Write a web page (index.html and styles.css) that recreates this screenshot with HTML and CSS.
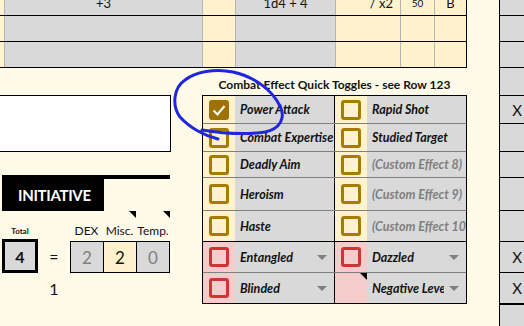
FILE: index.html
```html
<!DOCTYPE html>
<html lang="en">
<head>
    <meta charset="UTF-8">
    <meta name="viewport" content="width=device-width, initial-scale=1.0">
    <title>Character Sheet - Combat</title>
    <link rel="stylesheet" href="styles.css">
</head>
<body>

    <div class="sheet">
        <!-- Main area -->
        <div class="main">
            <!-- Attack rows -->
            <div class="top-row first">
                <div class="cell yellow"></div>
                <div class="cell gray">+3</div>
                <div class="cell yellow"></div>
                <div class="cell gray">1d4 + 4</div>
                <div class="cell yellow right">/ x2</div>
                <div class="cell yellow small">50</div>
                <div class="cell yellow last">B</div>
            </div>
            <div class="top-row">
                <div class="cell yellow"></div>
                <div class="cell gray"></div>
                <div class="cell yellow"></div>
                <div class="cell gray"></div>
                <div class="cell yellow"></div>
                <div class="cell yellow"></div>
                <div class="cell yellow last"></div>
            </div>
            <div class="top-row">
                <div class="cell yellow"></div>
                <div class="cell gray"></div>
                <div class="cell yellow"></div>
                <div class="cell gray"></div>
                <div class="cell yellow"></div>
                <div class="cell yellow"></div>
                <div class="cell yellow last"></div>
            </div>

            <div class="lower">
                <!-- Notes + initiative -->
                <div class="left">
                    <div class="note-box"></div>

                    <div class="init-head">
                        <div class="init-title">INITIATIVE</div>
                    </div>

                    <div class="init-grid">
                        <div class="lbl tiny">Total</div>
                        <div class="lbl"></div>
                        <div class="lbl">DEX</div>
                        <div class="lbl note">Misc.</div>
                        <div class="lbl note">Temp.</div>

                        <div class="total">4</div>
                        <div class="equals">=</div>
                        <div class="vals">
                            <div class="val muted">2</div>
                            <div class="val input">2</div>
                            <div class="val muted">0</div>
                        </div>

                        <div class="blank"></div>
                        <div class="equals">1</div>
                    </div>
                </div>

                <!-- Quick toggles -->
                <div class="toggles">
                    <div class="toggles-title">Combat Effect Quick Toggles - see Row 123</div>
                    <div class="toggle-table" id="toggle-table">
                        <!-- rows inserted by script -->
                    </div>
                </div>
            </div>
        </div>

        <div class="gap"></div>

        <!-- Right column -->
        <div class="side">
            <div class="side-cell h16"></div>
            <div class="side-cell h26"></div>
            <div class="side-cell h26"></div>
            <div class="side-cell h28"></div>
            <div class="side-cell h28">X</div>
            <div class="side-cell h28"></div>
            <div class="side-cell h26"></div>
            <div class="side-cell h33"></div>
            <div class="side-cell h31"></div>
            <div class="side-cell h31">X</div>
            <div class="side-cell h31">X</div>
            <div class="side-cell"></div>
        </div>
    </div>

    <!-- Hand-drawn marker -->
    <svg class="ink" width="524" height="326" viewBox="0 0 524 326">
        <path d="M218 139 C 205 136, 190 128, 180 117 C 172 106, 173 88, 185 80 C 195 72, 215 68, 233 72 C 255 77, 272 90, 280 106 C 286 118, 280 129, 265 132 C 245 135, 220 133, 202 130"
              fill="none" stroke="#1f26de" stroke-width="3" stroke-linecap="round" stroke-linejoin="round"/>
    </svg>

    <script>
        // Toggle rows: [left, right], kind = gold | red
        const toggleRows = [
            { h: 28, kind: 'gold', cells: [{ label: 'Power Attack', checked: true }, { label: 'Rapid Shot' }] },
            { h: 28, kind: 'gold', cells: [{ label: 'Combat Expertise' }, { label: 'Studied Target' }] },
            { h: 26, kind: 'gold', cells: [{ label: 'Deadly Aim' }, { label: '(Custom Effect 8)', custom: true }] },
            { h: 33, kind: 'gold', cells: [{ label: 'Heroism' }, { label: '(Custom Effect 9)', custom: true }] },
            { h: 31, kind: 'gold', cells: [{ label: 'Haste' }, { label: '(Custom Effect 10)', custom: true }] },
            { h: 31, kind: 'red', cells: [{ label: 'Entangled', drop: true }, { label: 'Dazzled', drop: true }] },
            { h: 30, kind: 'red', cells: [{ label: 'Blinded', drop: true }, { label: 'Negative Level', drop: true, noBox: true }] }
        ];

        const table = document.getElementById('toggle-table');
        const check = '<svg width="14" height="14" viewBox="0 0 14 14"><path d="M1.5 7.5 L5.5 11.5 L12.5 3" fill="none" stroke="#fff" stroke-width="2"/></svg>';

        toggleRows.forEach((row, i) => {
            const rowEl = document.createElement('div');
            rowEl.classList.add('t-row', row.kind);
            if (i === 4) rowEl.classList.add('split');
            rowEl.style.height = row.h + 'px';

            row.cells.forEach(cell => {
                const cellEl = document.createElement('div');
                cellEl.classList.add('t-cell');

                let box = '';
                if (cell.noBox) {
                    box = '<div class="box-col note"></div>';
                } else {
                    box = `<div class="box-col"><div class="box ${cell.checked ? 'checked' : ''}">${cell.checked ? check : ''}</div></div>`;
                }

                const arrow = cell.drop ? '<span class="drop"></span>' : '';
                cellEl.innerHTML = `${box}<div class="label ${cell.custom ? 'custom' : ''}"><span class="text">${cell.label}</span>${arrow}</div>`;
                rowEl.appendChild(cellEl);
            });

            table.appendChild(rowEl);
        });
    </script>

</body>
</html>
```

FILE: styles.css
```css
* {
    box-sizing: border-box;
}

body {
    margin: 0;
    width: 524px;
    height: 326px;
    overflow: hidden;
    position: relative;
    background-color: #fffbe8;
    font-family: Lato, "Liberation Sans", sans-serif;
    color: #111;
}

.sheet {
    display: flex;
    height: 326px;
}

.main {
    width: 467px;
    flex: none;
}

.gap {
    width: 32px;
    flex: none;
}

/* Attack rows */
.top-row {
    display: grid;
    grid-template-columns: 4px 198px 33px 100px 65px 34px 33px;
    height: 26px;
    border-bottom: 1px solid #000;
}

.top-row.first {
    margin-top: -10px;
}

.cell {
    border-left: 1px solid #b4b4b4;
    display: flex;
    align-items: center;
    justify-content: center;
    font-size: 13px;
}

.cell:first-child {
    border-left: none;
}

.cell.last {
    border-right: 1px solid #000;
}

.cell.right {
    justify-content: flex-end;
    padding-right: 7px;
}

.cell.small {
    font-size: 10px;
}

.gray {
    background-color: #d9d9d9;
}

.yellow {
    background-color: #fff2cc;
}

/* Lower area */
.lower {
    display: flex;
}

.left {
    width: 202px;
    flex: none;
}

.note-box {
    margin-top: 27px;
    width: 171px;
    height: 57px;
    background-color: #fff;
    border: 1px solid #000;
    border-left: none;
}

.init-head {
    margin-top: 23px;
    margin-left: 2px;
    width: 168px;
    border-top: 4px solid #000;
}

.init-title {
    width: 102px;
    height: 32px;
    background-color: #000;
    color: #fff;
    font-weight: 700;
    font-size: 15px;
    display: flex;
    align-items: center;
    padding-left: 16px;
    letter-spacing: -0.3px;
}

.init-grid {
    margin-left: 2px;
    display: grid;
    grid-template-columns: 36px 32px 33px 33px 34px;
    grid-template-rows: 28px 34px 30px;
}

.lbl {
    display: flex;
    align-items: flex-end;
    justify-content: center;
    font-size: 12px;
    padding-bottom: 1px;
    position: relative;
}

.lbl.tiny {
    font-size: 8px;
    font-weight: 700;
    padding-bottom: 3px;
}

.lbl.note::after {
    content: "";
    position: absolute;
    top: 0;
    right: 0;
    border-left: 7px solid transparent;
    border-top: 7px solid #000;
}

.total {
    border: 3px solid #000;
    background-color: #d9d9d9;
    display: flex;
    align-items: center;
    justify-content: center;
    font-weight: 700;
    font-size: 16px;
}

.equals {
    display: flex;
    align-items: center;
    justify-content: center;
    font-size: 16px;
}

.vals {
    grid-column: 3 / 6;
    margin-top: 2px;
    display: flex;
    border: 1px solid #000;
}

.val {
    flex: 1;
    display: flex;
    align-items: center;
    justify-content: center;
    font-size: 17px;
    background-color: #d9d9d9;
    border-left: 1px solid #000;
}

.val:first-child {
    border-left: none;
}

.val.muted {
    color: #7f7f7f;
}

.val.input {
    background-color: #fff2cc;
}

/* Quick toggles */
.toggles {
    width: 265px;
    flex: none;
}

.toggles-title {
    height: 27px;
    padding-top: 10px;
    line-height: 14px;
    text-align: center;
    font-weight: 700;
    font-size: 12px;
    white-space: nowrap;
}

.toggle-table {
    border: 1px solid #000;
}

.t-row {
    display: flex;
    border-bottom: 1px solid #808080;
}

.t-row:last-child {
    border-bottom: none;
}

.t-row.split {
    border-bottom-color: #000;
}

.t-cell {
    width: 131px;
    display: flex;
}

.t-cell:first-child {
    width: 132px;
    border-right: 1px solid #000;
}

.box-col {
    width: 32px;
    flex: none;
    display: flex;
    align-items: center;
    padding-left: 6px;
    background-color: #fff2cc;
    position: relative;
}

.red .box-col {
    background-color: #f4cccc;
}

.box-col.note::after {
    content: "";
    position: absolute;
    top: 0;
    right: 0;
    border-left: 7px solid transparent;
    border-top: 7px solid #000;
}

.box {
    width: 20px;
    height: 20px;
    border: 3px solid #a67c00;
    border-radius: 3px;
    display: flex;
}

.box.checked {
    background-color: #9e7200;
    border-color: #9e7200;
}

.red .box {
    border-color: #d03535;
}

.label {
    flex: 1;
    min-width: 0;
    display: flex;
    align-items: center;
    padding-left: 5px;
    background-color: #d9d9d9;
    font-weight: 700;
    font-style: italic;
    font-size: 12.5px;
    overflow: hidden;
}

.label .text {
    flex: 1;
    min-width: 0;
    white-space: nowrap;
    overflow: hidden;
}

.label.custom {
    color: #7f7f7f;
}

.drop {
    flex: none;
    margin-left: 5px;
    margin-right: 7px;
    border-left: 5px solid transparent;
    border-right: 5px solid transparent;
    border-top: 5px solid #808080;
}

/* Right column */
.side {
    width: 35px;
    flex: none;
    border-left: 1px solid #000;
    background-color: #d9d9d9;
}

.side-cell {
    border-bottom: 1px solid #000;
    display: flex;
    align-items: center;
    justify-content: center;
    font-size: 15px;
}

.h16 { height: 16px; }
.h26 { height: 26px; }
.h28 { height: 28px; }
.h31 { height: 31px; }
.h33 { height: 33px; }

/* Marker overlay */
.ink {
    position: absolute;
    top: 0;
    left: 0;
    pointer-events: none;
}
```
